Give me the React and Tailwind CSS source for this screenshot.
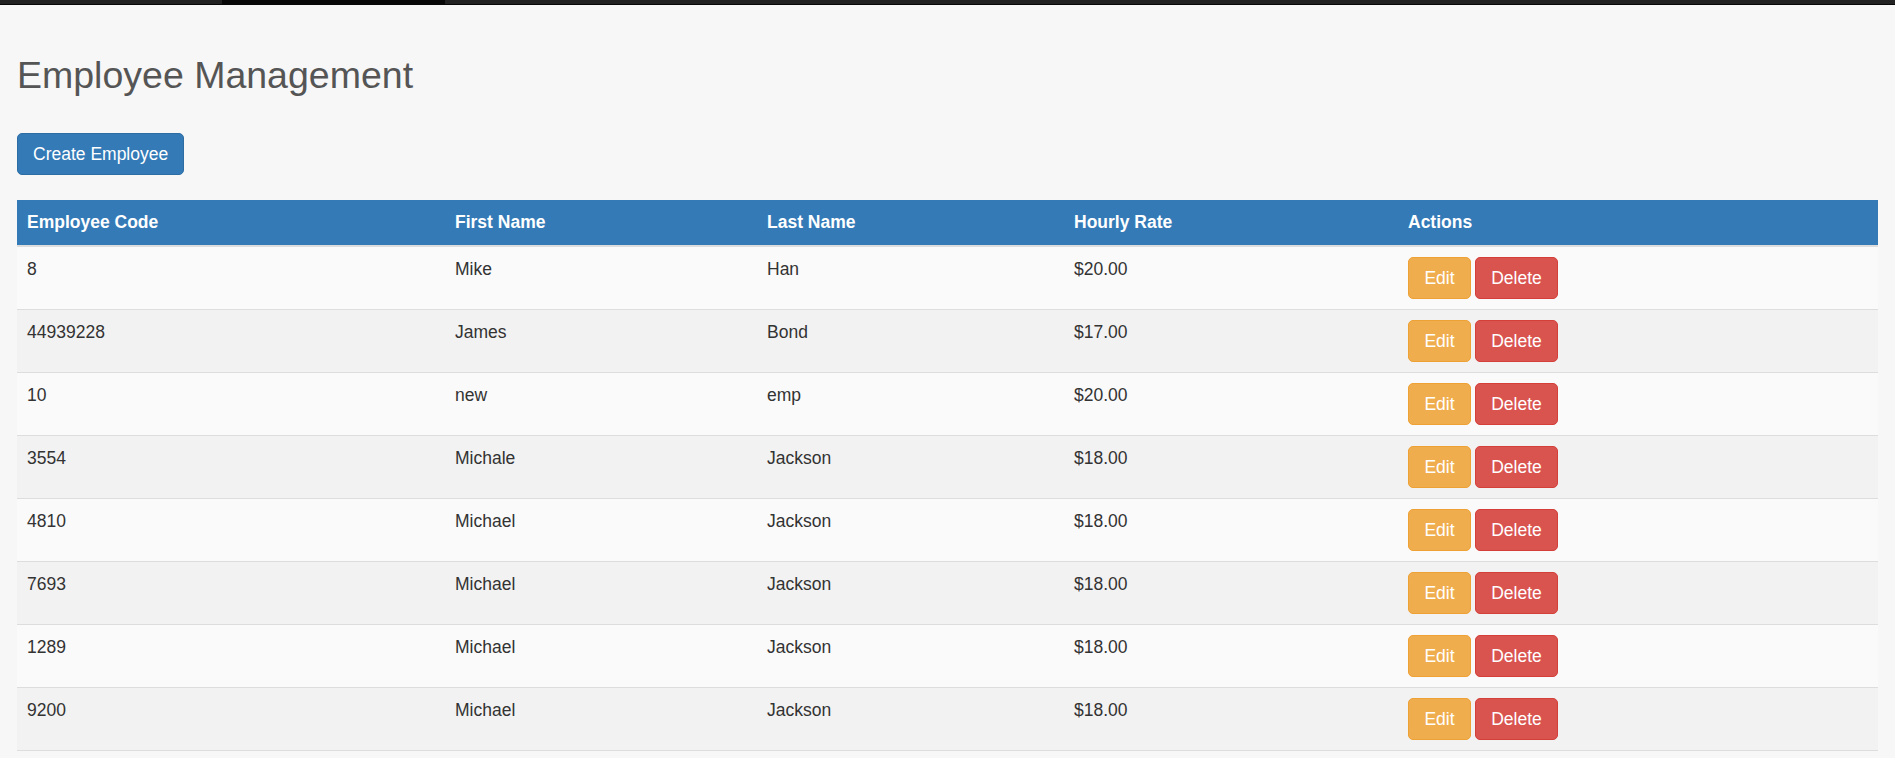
const employees = [
    { code: "8", first: "Mike", last: "Han", rate: "$20.00" },
    { code: "44939228", first: "James", last: "Bond", rate: "$17.00" },
    { code: "10", first: "new", last: "emp", rate: "$20.00" },
    { code: "3554", first: "Michale", last: "Jackson", rate: "$18.00" },
    { code: "4810", first: "Michael", last: "Jackson", rate: "$18.00" },
    { code: "7693", first: "Michael", last: "Jackson", rate: "$18.00" },
    { code: "1289", first: "Michael", last: "Jackson", rate: "$18.00" },
    { code: "9200", first: "Michael", last: "Jackson", rate: "$18.00" },
];

export default function App() {
    return (
        <div className="min-h-[758px] bg-[#f7f7f7] text-[#333] text-[17.5px] leading-[25px] font-['Liberation_Sans',Arial,sans-serif]">
            {/* Navbar strip */}
            <div className="flex h-[5px] bg-[#222] border-b border-[#080808]">
                <div className="ml-[222px] w-[223px] bg-[#080808]"></div>
            </div>

            <div className="px-[17px]">
                <h2 className="mt-[50px] text-[37.5px] leading-[41px] font-normal text-[#555]">Employee Management</h2>

                <button className="mt-[37px] h-[42px] px-[15px] rounded-[5px] bg-[#337ab7] border border-[#2e6da4] text-white">
                    Create Employee
                </button>

                {/* Table */}
                <table className="mt-[25px] w-full table-fixed border-collapse">
                    <thead>
                        <tr className="bg-[#337ab7] text-white border-b-2 border-[#ddd]">
                            <th className="w-[428px] p-[10px] text-left font-bold">Employee Code</th>
                            <th className="w-[312px] p-[10px] text-left font-bold">First Name</th>
                            <th className="w-[307px] p-[10px] text-left font-bold">Last Name</th>
                            <th className="w-[334px] p-[10px] text-left font-bold">Hourly Rate</th>
                            <th className="p-[10px] text-left font-bold">Actions</th>
                        </tr>
                    </thead>
                    <tbody>
                        {employees.map((emp, i) => (
                            <tr
                                key={emp.code}
                                className={`border-b border-[#ddd] ${i % 2 === 0 ? "bg-[#fafafa]" : "bg-[#f2f2f2]"}`}
                            >
                                <td className="p-[10px] align-top">{emp.code}</td>
                                <td className="p-[10px] align-top">{emp.first}</td>
                                <td className="p-[10px] align-top">{emp.last}</td>
                                <td className="p-[10px] align-top">{emp.rate}</td>
                                <td className="p-[10px] align-top">
                                    <div className="flex gap-[4px]">
                                        <button className="w-[63px] h-[42px] rounded-[5px] bg-[#f0ad4e] border border-[#eea236] text-white">
                                            Edit
                                        </button>
                                        <button className="w-[83px] h-[42px] rounded-[5px] bg-[#d9534f] border border-[#d43f3a] text-white">
                                            Delete
                                        </button>
                                    </div>
                                </td>
                            </tr>
                        ))}
                    </tbody>
                </table>
            </div>
        </div>
    );
}
